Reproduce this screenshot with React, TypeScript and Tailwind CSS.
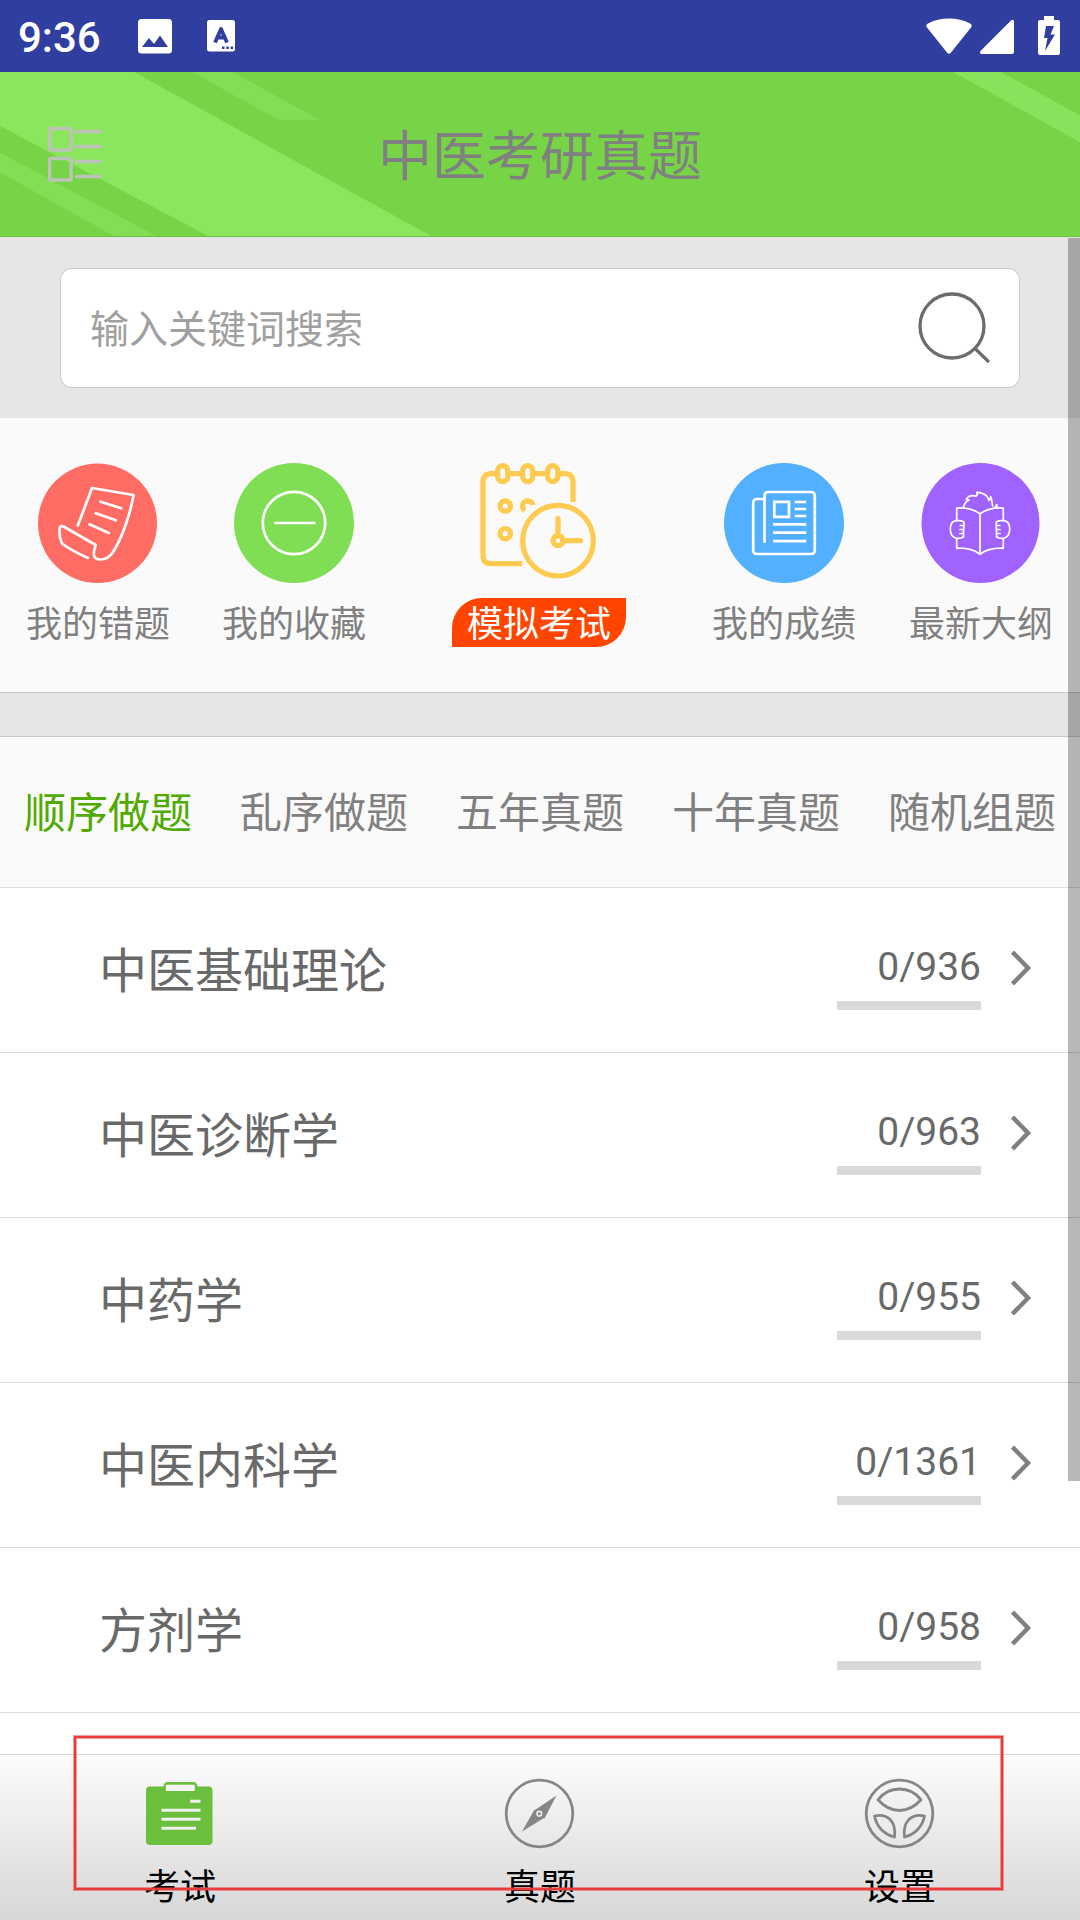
import React from "react";

const shortcuts = [
  { label: "我的错题", icon: <WrongIcon />, width: "w-[196px]" },
  { label: "我的收藏", icon: <FavoriteIcon />, width: "w-[196px]" },
  { label: "模拟考试", icon: <MockExamIcon />, width: "w-[294px]", highlight: true },
  { label: "我的成绩", icon: <ScoreIcon />, width: "w-[196px]" },
  { label: "最新大纲", icon: <OutlineIcon />, width: "w-[198px]" },
];

const tabs = ["顺序做题", "乱序做题", "五年真题", "十年真题", "随机组题"];

const subjects = [
  { name: "中医基础理论", done: 0, total: 936 },
  { name: "中医诊断学", done: 0, total: 963 },
  { name: "中药学", done: 0, total: 955 },
  { name: "中医内科学", done: 0, total: 1361 },
  { name: "方剂学", done: 0, total: 958 },
];

const navItems = [
  { label: "考试", icon: <ClipboardIcon /> },
  { label: "真题", icon: <CompassIcon /> },
  { label: "设置", icon: <WheelIcon /> },
];

function WrongIcon() {
  return (
    <svg width="120" height="120" viewBox="0 0 120 120" fill="none">
      <ellipse cx="59.5" cy="60.3" rx="59.5" ry="59.7" fill="#ff6c63" />
      <g stroke="#fff" strokeWidth="2.7" strokeLinecap="round" strokeLinejoin="round">
        <path d="M39.8 62.5 54 25l41.6 7C92 52 84 75 75 89c-4 6-7.5 7.5-12 7.5-5 0-7.5-2-7.2-6.5.2-3 1.2-5 1.9-8L25.5 63.5c-2.5-1.2-3.8 0-4 3-.3 5 .5 10 2.5 14C32 86.5 41 91 50 95" />
        <path d="m62.5 38.7 20.7 6.6M57.7 50.3l20 7M51.4 61.3 70.800 70" />
      </g>
    </svg>
  );
}

function FavoriteIcon() {
  return (
    <svg width="120" height="120" viewBox="0 0 120 120" fill="none">
      <circle cx="60" cy="60" r="60" fill="#80de55" />
      <g stroke="#fff" strokeWidth="2.7">
        <circle cx="60" cy="60" r="31.2" />
        <path d="M40.5 60h41" />
      </g>
    </svg>
  );
}

function MockExamIcon() {
  return (
    <svg className="-mt-[3px] mb-[3px]" width="120" height="120" viewBox="-1 0 120 120" fill="none" stroke="#ffca50" strokeWidth="5.2">
      <path d="M93 42V22q0-8.3-8.3-8.3H80M65.5 13.700H55M40.500 13.700H30M15.500 13.700h-4.200Q3 13.700 3 22v73.400q0 8.300 8.300 8.300h31" />
      <rect x="17.7" y="5.7" width="10" height="16" rx="5" />
      <rect x="42.7" y="5.7" width="10" height="16" rx="5" />
      <rect x="67.7" y="5.7" width="10" height="16" rx="5" />
      <circle cx="25.3" cy="46" r="5.2" />
      <circle cx="25.3" cy="73.7" r="5.2" />
      <path d="M45 50.500A5.200 5.200 0 1 1 52.800 45" />
      <circle cx="78" cy="80.7" r="35.3" />
      <circle cx="78" cy="80.7" r="5" />
      <path d="M78 76V58.500M83 80.700h17.500" strokeLinecap="round" />
    </svg>
  );
}

function ScoreIcon() {
  return (
    <svg width="120" height="120" viewBox="0 0 120 120" fill="none">
      <circle cx="60" cy="60" r="60" fill="#53b0fe" />
      <g stroke="#fff" strokeWidth="2.7">
        <path d="M40.500 79.700V33q0-4 4-4h42.300q4 0 4 4v54q0 4-4 4H33.200q-4 0-4-4V40q0-4 4-4h7.300" />
        <path d="M50.300 38.800H65v15H50.300zM70.800 39h11.400M70.800 46h11.400M70.800 53h11.400M49.100 61.300h33.100M49.100 69.700h33.100M49.100 78.200h33.100" />
      </g>
    </svg>
  );
}

function OutlineIcon() {
  return (
    <svg width="120" height="120" viewBox="0 0 120 120" fill="none">
      <ellipse cx="59.500" cy="60" rx="59" ry="60" fill="#a163ff" />
      <g stroke="#fff" strokeWidth="1.7" strokeLinejoin="round">
        <path d="M35.700 57.700V45c9-.5 17 1 23.300 5.700C65.500 46 73.500 44.500 82.300 45v12.700M35.700 75.500v9.800c9-.5 17 1.200 23.300 6 6.500-4.800 14.500-6.500 23.300-6v-9.800M59 50.700v40.600" />
        <path d="M43 59c-2-1.300-4-1.500-7.300-1.300-4.500.3-6.400 4-6.400 8.300 0 5 2.500 8.500 6.400 9.300 2.500.3 5-.3 6.800-1.300v-3.500h-3.500 3.500v-4h-3.500 3.800v-4h-3.500H43z" />
        <path d="M75.300 59c2-1.300 4-1.500 7-1.300 4.500.3 6.400 4 6.400 8.300 0 5-2.500 8.500-6.400 9.300-2.500.3-5-.3-6.800-1.300v-3.500H79h-3.500v-4H79h-3.700v-4h3.500-3.500z" />
        <path d="M42.300 44.500c1-3.500 3-6.500 5.700-7.500l-2.700-.7c1.500-2.500 4-3.600 6-3.600 1.700 0 3 .6 4 .3 1-1 1.200-2.500.4-3.700 4-.2 7 1.200 9.600 3.400 1.300 1.300 2 2.800 2.700 4.800 1-1 2-2 1.700-3.700 1.600 3.200 1 7 2.300 9.900M73.500 45.200l2.300-3.500.2 3.300" />
      </g>
    </svg>
  );
}

function ClipboardIcon() {
  return (
    <svg width="72" height="72" viewBox="3 0 72 72" fill="none">
      <path d="M5 12.500Q5 8.500 9 8.500h13.500q.5-4.500 4-4.500h26q3.500 0 4 4.500h11q4 0 4 4v50.500q0 4-4 4H9q-4 0-4-4z" fill="#6bbe3e" />
      <rect x="24.800" y="6.800" width="29" height="6.200" rx="1" fill="#f5f5f5" />
      <path d="M49 23.200h10.500M20.500 32.200h39M20.500 41.200h39M20.500 50.200H55" stroke="#f0f0f0" strokeWidth="3" />
    </svg>
  );
}

function CompassIcon() {
  return (
    <svg width="72" height="72" viewBox="0.5 0 72 72" fill="none">
      <circle cx="36" cy="35.500" r="33.300" stroke="#868686" strokeWidth="2.700" />
      <path d="M53 17.500 41 40.500 31.500 32zM18.500 53.500l12.500-22 9.500 8.500z" fill="#868686" />
      <circle cx="35.800" cy="35.700" r="4" fill="#eee" stroke="#868686" strokeWidth="1.800" />
      <circle cx="35.800" cy="35.700" r="1.500" fill="#868686" />
    </svg>
  );
}

function WheelIcon() {
  return (
    <svg width="72" height="72" viewBox="0.5 0.5 72 72" fill="none" stroke="#868686" strokeWidth="2.800" strokeLinejoin="round">
      <circle cx="36" cy="36" r="33.300" />
      <path d="M14.500 22.300C20 15 27.500 11.500 36 11.500S52 15 57.500 22.300C51.500 29 44.500 33 36 33s-15.500-4-21.500-10.700z" />
      <path d="M11 38.500c13-3 22 5.500 20 21C20.500 57 13 49 11 38.500zM61 38.500c-13-3-22 5.500-20 21C51.500 57 59 49 61 38.500z" />
    </svg>
  );
}

const StatusBar: React.FC = () => (
  <div className="flex h-[72px] shrink-0 items-center bg-[#303f9f] pl-[18px] text-white">
    <span className="w-[120px] pt-[3px] font-['Roboto'] text-[42px] leading-[72px] font-medium">9:36</span>
    <svg width="34" height="36" viewBox="0 0 34 36">
      <rect y="1" width="34" height="34.500" rx="3.500" fill="#fff" />
      <path d="m4 29 7-9 5 6 6-8.500L30 29z" fill="#303f9f" />
    </svg>
    <svg className="ml-[35px]" width="28" height="34" viewBox="0 0 28 34">
      <rect y="1" width="28" height="31.500" rx="2.500" fill="#fff" />
      <path d="m8 23.500 6-13.500 6 13.500M10 18.500h8" stroke="#303f9f" strokeWidth="3.800" strokeLinejoin="round" fill="none" />
      <path d="M15 28.700h2.500M19.300 28.700h2.500M23.500 28.700H26" stroke="#303f9f" strokeWidth="2.500" />
    </svg>
    <svg className="ml-auto" width="46" height="38" viewBox="0 0 46 38">
      <path d="M1 10.500C-.3 9 .2 7.500 2 6.400 14-.2 32-.2 44 6.400c1.800 1.100 2.300 2.600 1 4.100L25 35.500q-2 2.500-4 0z" fill="#fff" />
    </svg>
    <svg className="ml-[8px]" width="34" height="38" viewBox="0 0 34 38">
      <path d="M31 3.500q3-2 3 1.500v29.500q0 2.500-2.500 2.500H2q-3 0-1.500-3z" fill="#fff" />
    </svg>
    <svg className="mr-[20px] mb-[3px] ml-[24px]" width="22" height="40" viewBox="0 0 22 40">
      <path d="M6 1h10v4h4q2 0 2 2v31q0 2-2 2H2q-2 0-2-2V7q0-2 2-2h4z" fill="#fff" />
      <path d="M8 11h8l-3.500 8.500H17L7 36l2.500-13H6z" fill="#303f9f" />
    </svg>
  </div>
);

const Header: React.FC = () => (
  <div className="relative flex h-[165px] shrink-0 items-center justify-center border-b border-[#6cbe42] bg-[#76d446]">
    <svg className="absolute inset-0" width="1080" height="164" viewBox="0 0 1080 164">
      <path d="M0 0h134l297 164H208L0 54z" fill="#8be55d" />
      <path d="M0 80.500 156 164h-42L0 100.500zM192 0h41l86 47.700h-41z" fill="#83dd55" />
      <path d="M953 0h48l79 43.500v26.800z" fill="#89e25b" />
    </svg>
    <svg className="absolute top-[54px] left-[48px]" width="54" height="56" viewBox="0 0 54 56" fill="none" stroke="#bdc3bb" strokeWidth="3.400">
      <rect x="1.700" y="2.500" width="21.500" height="21.500" rx="1.500" />
      <rect x="1.700" y="32.500" width="21.500" height="21.500" rx="1.500" />
      <path d="M28.500 5.500h24M28.500 20.500h24M28.500 35.500h24M28.500 50.500h24" strokeLinecap="round" />
    </svg>
    <h1 className="relative pb-[2px] text-[54px] leading-[80px] text-[#808080]">中医考研真题</h1>
  </div>
);

const SearchBar: React.FC = () => (
  <div className="h-[181px] shrink-0 bg-[#e6e6e6] px-[60px] pt-[31px]">
    <div className="flex h-[120px] items-center justify-between rounded-[12px] border border-[#ccc] bg-white pr-[29px] pl-[29px]">
      <span className="pb-[4px] text-[39px] leading-[60px] text-[#a0a0a0]">输入关键词搜索</span>
      <svg width="72" height="72" viewBox="0 0 72 72" fill="none" stroke="#6c6c6c" strokeWidth="3.300">
        <circle cx="34" cy="34" r="32" />
        <path d="m57 56.500 14 13.500" />
      </svg>
    </div>
  </div>
);

const Shortcuts: React.FC = () => (
  <div className="flex h-[275px] shrink-0 border-b border-[#c8c8c8] bg-[#fafafa] pt-[45px]">
    {shortcuts.map((item) => (
      <div key={item.label} className={`flex shrink-0 flex-col items-center ${item.width}`}>
        {item.icon}
        {item.highlight ? (
          <span className="mt-[15px] h-[49px] rounded-tl-[30px] rounded-br-[30px] bg-[#ff4500] px-[15px] text-[36px] leading-[47px] text-white">
            {item.label}
          </span>
        ) : (
          <span className="mt-[15px] text-[36px] leading-[47px] text-[#808080]">{item.label}</span>
        )}
      </div>
    ))}
  </div>
);

const SubjectRow: React.FC<{ name: string; done: number; total: number }> = ({ name, done, total }) => (
  <div className="flex h-[165px] shrink-0 items-center border-b border-[#ddd] bg-white pr-[48px] pl-[99px]">
    <span className="pb-[6px] text-[48px] leading-[70px] text-[#696969]">{name}</span>
    <div className="ml-auto flex w-[144px] flex-col items-end pt-[14px]">
      <span className="font-['Roboto'] text-[39px] leading-[46px] text-[#696969]">
        {done}/{total}
      </span>
      <div className="mt-[11px] h-[9px] w-full bg-[#d9d9d9]" />
    </div>
    <svg className="mb-[4px] ml-[30px]" width="21" height="36" viewBox="0 0 21 36" fill="none" stroke="#808080" strokeWidth="4.500">
      <path d="m1.500 2 15.500 16L1.500 34" />
    </svg>
  </div>
);

const BottomNav: React.FC = () => (
  <div className="mt-auto flex h-[166px] shrink-0 border-t border-[#d6d6d6] bg-linear-to-b from-[#fcfcfc] to-[#d7d7d7]">
    {navItems.map((item) => (
      <div key={item.label} className="flex flex-1 flex-col items-center pt-[23px]">
        {item.icon}
        <span className="mt-[10px] text-[36px] leading-[48px] text-black">{item.label}</span>
      </div>
    ))}
  </div>
);

const App: React.FC = () => {
  return (
    <div className="relative flex h-[1920px] w-[1080px] flex-col overflow-hidden bg-white font-['Noto_Sans_CJK_SC',sans-serif]">
      <StatusBar />
      <Header />
      <SearchBar />
      <Shortcuts />
      <div className="h-[44px] shrink-0 border-b border-[#c8c8c8] bg-[#e6e6e6]" />
      <div className="grid h-[151px] shrink-0 grid-cols-5 items-center border-b border-[#ddd] bg-[#fafafa] pb-[5px] text-center text-[42px] leading-[60px]">
        {tabs.map((tab, index) => (
          <span key={tab} className={index === 0 ? "text-[#50aa00]" : "text-[#808080]"}>
            {tab}
          </span>
        ))}
      </div>
      {subjects.map((subject) => (
        <SubjectRow key={subject.name} {...subject} />
      ))}
      <BottomNav />
      {/* scrollbar thumb */}
      <div className="absolute top-[238px] right-0 h-[1243px] w-[12px] bg-black/28" />
      {/* highlight frame around the nav */}
      <div className="absolute top-[1736px] left-[74px] h-[154px] w-[929px] border-2 border-[#e83c3c] shadow-[0_0_0_1px_rgba(232,60,60,0.5),inset_0_0_0_1px_rgba(232,60,60,0.5)]" />
    </div>
  );
};

export default App;
